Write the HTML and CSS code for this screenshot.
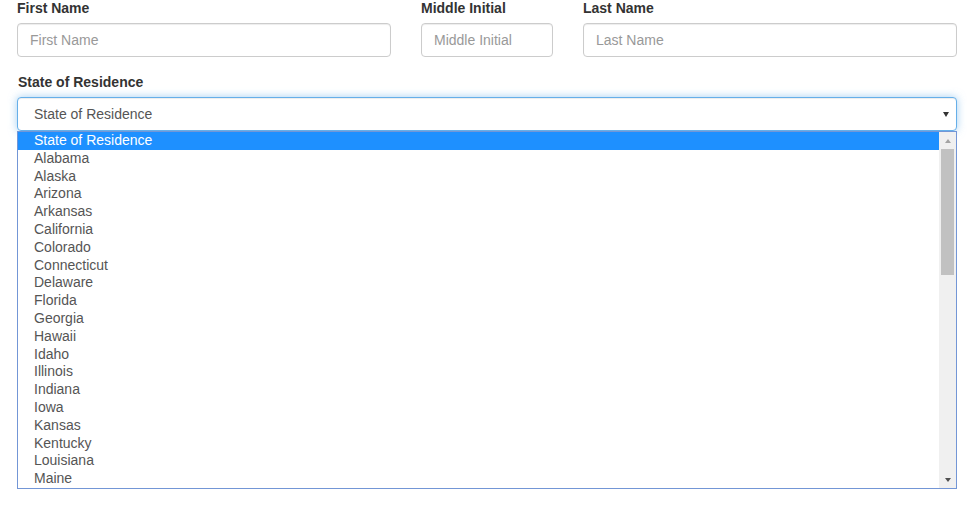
FILE: index.html
```html
<!DOCTYPE html>
<html lang="en">
<head>
<meta charset="utf-8">
<title>Form</title>
<link rel="stylesheet" href="styles.css">
</head>
<body>
<form class="form">
  <div class="name-row">
    <div class="group col-wide">
      <label class="label">First Name</label>
      <input class="control" type="text" placeholder="First Name">
    </div>
    <div class="group col-narrow">
      <label class="label">Middle Initial</label>
      <input class="control" type="text" placeholder="Middle Initial">
    </div>
    <div class="group col-wide">
      <label class="label">Last Name</label>
      <input class="control" type="text" placeholder="Last Name">
    </div>
  </div>
  <div class="group state-group">
    <label class="label">State of Residence</label>
    <div class="select-wrap">
      <div class="select">State of Residence<span class="caret"></span></div>
      <div class="dropdown">
        <ul class="options">
          <li class="option selected">State of Residence</li>
          <li class="option">Alabama</li>
          <li class="option">Alaska</li>
          <li class="option">Arizona</li>
          <li class="option">Arkansas</li>
          <li class="option">California</li>
          <li class="option">Colorado</li>
          <li class="option">Connecticut</li>
          <li class="option">Delaware</li>
          <li class="option">Florida</li>
          <li class="option">Georgia</li>
          <li class="option">Hawaii</li>
          <li class="option">Idaho</li>
          <li class="option">Illinois</li>
          <li class="option">Indiana</li>
          <li class="option">Iowa</li>
          <li class="option">Kansas</li>
          <li class="option">Kentucky</li>
          <li class="option">Louisiana</li>
          <li class="option">Maine</li>
        </ul>
        <div class="scrollbar">
          <div class="sb-btn"><span class="arrow-up"></span></div>
          <div class="thumb"></div>
          <div class="sb-space"></div>
          <div class="sb-btn"><span class="arrow-down"></span></div>
        </div>
      </div>
    </div>
  </div>
</form>
</body>
</html>
```
FILE: styles.css
```css
html, body {
  margin: 0;
  padding: 0;
  background: #ffffff;
}

body {
  min-height: 507px;
  font-family: "Liberation Sans", Arial, sans-serif;
  font-size: 14px;
  line-height: 20px;
  color: #333333;
}

.form {
  margin-top: -2px;
  padding-left: 17px;
  width: 940px;
}

.name-row {
  display: flex;
  gap: 30px;
}

.col-wide {
  width: 374px;
}

.col-narrow {
  width: 132px;
}

.group {
  margin-bottom: 15px;
}

.label {
  display: block;
  font-weight: bold;
  margin-bottom: 5px;
  color: #333333;
}

.state-group .label {
  padding-left: 1px;
}

.control {
  display: block;
  box-sizing: border-box;
  width: 100%;
  height: 34px;
  margin: 0;
  padding: 6px 12px;
  border: 1px solid #cccccc;
  border-radius: 4px;
  font-family: "Liberation Sans", Arial, sans-serif;
  font-size: 14px;
  line-height: 20px;
  color: #555555;
  background: #ffffff;
  box-shadow: inset 0 1px 1px rgba(0, 0, 0, 0.075);
  outline: none;
}

.control::placeholder {
  color: #999999;
}

.select-wrap {
  display: flex;
  flex-direction: column;
}

.select {
  box-sizing: border-box;
  height: 34px;
  padding: 6px 16px;
  border: 1px solid #66afe9;
  border-radius: 4px;
  color: #555555;
  background: #ffffff;
  box-shadow: inset 0 1px 1px rgba(0, 0, 0, 0.075), 0 0 8px rgba(102, 175, 233, 0.6);
  display: flex;
  align-items: center;
  justify-content: space-between;
}

.caret {
  width: 0;
  height: 0;
  margin-right: -9px;
  border-left: 3px solid transparent;
  border-right: 3px solid transparent;
  border-top: 5px solid #333333;
}

.dropdown {
  box-sizing: border-box;
  height: 358px;
  border: 1px solid #7396d6;
  background: #ffffff;
  display: flex;
  overflow: hidden;
}

.options {
  flex: 1;
  margin: 0;
  padding: 0;
  list-style: none;
  overflow: hidden;
}

.option {
  height: 17.8px;
  line-height: 17.8px;
  padding-left: 16px;
  color: #555555;
  white-space: nowrap;
}

.option.selected {
  background: #1e90ff;
  color: #ffffff;
}

.scrollbar {
  width: 17px;
  background: #f0f0f0;
  display: flex;
  flex-direction: column;
}

.sb-btn {
  height: 17px;
  display: flex;
  align-items: center;
  justify-content: center;
}

.arrow-up {
  width: 0;
  height: 0;
  border-left: 3.5px solid transparent;
  border-right: 3.5px solid transparent;
  border-bottom: 4px solid #a3a3a3;
}

.arrow-down {
  width: 0;
  height: 0;
  border-left: 3.5px solid transparent;
  border-right: 3.5px solid transparent;
  border-top: 4px solid #505050;
}

.thumb {
  height: 126px;
  margin: 0 2px;
  background: #c1c1c1;
}

.sb-space {
  flex: 1;
}
```
